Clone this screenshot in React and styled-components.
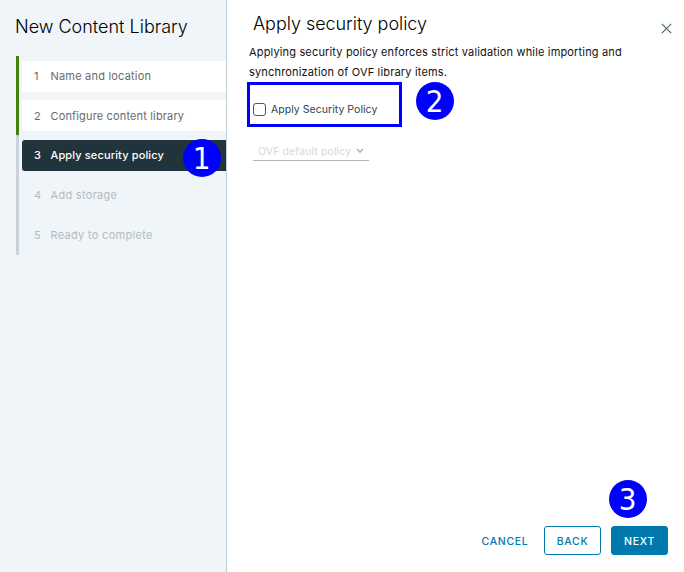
import React from "react";
import styled, { createGlobalStyle } from "styled-components";

const GlobalStyle = createGlobalStyle`
  *, *::before, *::after { box-sizing: border-box; }
  body {
    margin: 0;
    background: #fff;
    overflow: hidden;
    font-family: Inter, "Open Sans", sans-serif;
  }
  h1, h2, p { margin: 0; }
  button { font-family: inherit; }
`;

const Wizard = styled.div`
  position: relative;
  display: grid;
  grid-template-columns: 227px 1fr;
  width: 684px;
  height: 572px;
`;

const Sidebar = styled.aside`
  background: #eff5f8;
  border-right: 1px solid #c1cdd4;
`;

const SidebarTitle = styled.h1`
  height: 56px;
  padding: 14px 0 0 15px;
  font-size: 18px;
  line-height: 26px;
  font-weight: 300;
  letter-spacing: 0;
  color: #000;
  white-space: nowrap;
`;

const Steps = styled.nav`
  display: grid;
  grid-template-rows: 39px repeat(4, 40px);
  margin-left: 16px;
`;

const StepRow = styled.div`
  padding: 5px 0 0 3px;
  border-left: 3px solid ${(p) => (p.$state === "done" ? "#42810e" : "#c8d4da")};
`;

const stepLook = {
  done: { bg: "#fff", fg: "#6a6a6a", weight: 400 },
  current: { bg: "#21333b", fg: "#fff", weight: 500 },
  pending: { bg: "transparent", fg: "#b5bbbe", weight: 400 },
};

const Step = styled.div`
  display: flex;
  align-items: center;
  height: 31px;
  padding: 0 0 ${(p) => p.$lift}px 12px;
  border-radius: 3px 0 0 3px;
  background: ${(p) => stepLook[p.$state].bg};
  color: ${(p) => stepLook[p.$state].fg};
  font-size: 11px;
  font-weight: ${(p) => stepLook[p.$state].weight};
  letter-spacing: ${(p) => p.$spacing}px;
  white-space: nowrap;
`;

const StepNumber = styled.span`
  width: 16.5px;
`;

const Main = styled.main`
  display: flex;
  flex-direction: column;
  padding: 0 16px 17px 21px;
`;

const Header = styled.header`
  display: flex;
  justify-content: space-between;
  height: 42px;
  padding-left: 5px;
  margin-right: -4px;
`;

const PageTitle = styled.h2`
  padding-top: 11px;
  font-size: 18px;
  line-height: 26px;
  font-weight: 300;
  letter-spacing: -0.04px;
  color: #000;
  white-space: nowrap;
`;

const CloseButton = styled.button`
  display: flex;
  width: 11px;
  height: 11px;
  margin: 23px 0 0;
  padding: 0;
  border: 0;
  background: none;
`;

const Description = styled.p`
  height: 40px;
  padding-left: 1px;
  font-size: 11px;
  line-height: 20px;
  color: #111;
  white-space: nowrap;
`;

const Line = styled.span`
  display: block;
  letter-spacing: ${(p) => p.$spacing}px;
`;

const CheckboxFrame = styled.label`
  display: flex;
  align-items: center;
  width: 155px;
  height: 45px;
  margin-left: -1px;
  padding: 9px 0 0 3px;
  border: 3px solid #0000fe;
  font-size: 10.5px;
  letter-spacing: 0.04px;
  color: #2c444f;
  white-space: nowrap;
`;

const Checkbox = styled.span`
  width: 13px;
  height: 13px;
  margin-right: 5px;
  border: 1px solid #555;
  border-radius: 3px;
`;

const Select = styled.div`
  display: flex;
  align-items: center;
  width: 116px;
  height: 19px;
  margin: 15px 0 0 5px;
  padding: 0 5px;
  border-bottom: 1px solid #b3b3b3;
  font-size: 10.5px;
  letter-spacing: 0.12px;
  color: #d8d8d8;
  white-space: nowrap;
`;

const Chevron = styled.svg`
  margin-left: auto;
`;

const Footer = styled.footer`
  display: flex;
  justify-content: flex-end;
  gap: 10px;
  margin-top: auto;
`;

const buttonLook = {
  link: { bg: "transparent", fg: "#0079ad", line: "transparent", width: 58 },
  outline: { bg: "#fff", fg: "#0079ad", line: "#0079ad", width: 57 },
  solid: { bg: "#0079ad", fg: "#fff", line: "#0079ad", width: 57 },
};

const Button = styled.button`
  width: ${(p) => buttonLook[p.$kind].width}px;
  height: 29px;
  padding: 1px 0 0;
  border: 1px solid ${(p) => buttonLook[p.$kind].line};
  border-radius: 3px;
  background: ${(p) => buttonLook[p.$kind].bg};
  color: ${(p) => buttonLook[p.$kind].fg};
  font-size: 10.5px;
  font-weight: 500;
  letter-spacing: ${(p) => p.$spacing}px;
`;

const Badge = styled.span`
  position: absolute;
  left: ${(p) => p.$x}px;
  top: ${(p) => p.$y}px;
  width: 38px;
  height: 38px;
  border-radius: 50%;
  background: #0000fe;
  color: #fff;
  font: 31px/38px "DejaVu Sans Condensed", "DejaVu Sans", sans-serif;
  font-stretch: condensed;
  text-align: center;
  text-indent: -1px;
`;

const steps = [
  { label: "Name and location", state: "done", spacing: 0.2, lift: 1 },
  { label: "Configure content library", state: "done", spacing: 0.15, lift: 0 },
  { label: "Apply security policy", state: "current", spacing: 0.13, lift: 2 },
  { label: "Add storage", state: "pending", spacing: 0.3, lift: 2 },
  { label: "Ready to complete", state: "pending", spacing: 0.3, lift: 2 },
];

export default function App() {
  return (
    <>
      <GlobalStyle />
      <Wizard>
        <Sidebar>
          <SidebarTitle>New Content Library</SidebarTitle>
          <Steps>
            {steps.map((s, i) => (
              <StepRow key={s.label} $state={s.state}>
                <Step $state={s.state} $spacing={s.spacing} $lift={s.lift}>
                  <StepNumber>{i + 1}</StepNumber>
                  <span>{s.label}</span>
                </Step>
              </StepRow>
            ))}
          </Steps>
        </Sidebar>
        <Main>
          <Header>
            <PageTitle>Apply security policy</PageTitle>
            <CloseButton aria-label="Close">
              <svg width="11" height="11" viewBox="0 0 11 11" fill="none" stroke="#4a606b" strokeWidth="1.1">
                <path d="M0.8 0.8 10.2 10.2M10.2 0.8 0.8 10.2" />
              </svg>
            </CloseButton>
          </Header>
          <Description>
            <Line $spacing={0.16}>Applying security policy enforces strict validation while importing and</Line>
            <Line $spacing={0.17}>synchronization of OVF library items.</Line>
          </Description>
          <CheckboxFrame>
            <Checkbox />
            <span>Apply Security Policy</span>
          </CheckboxFrame>
          <Select>
            <span>OVF default policy</span>
            <Chevron width="8" height="6" viewBox="0 0 8 6" fill="none" stroke="#b0b0b0" strokeWidth="1.5">
              <path d="M1 1 4 4.2 7 1" />
            </Chevron>
          </Select>
          <Footer>
            <Button $kind="link" $spacing={0.7}>CANCEL</Button>
            <Button $kind="outline" $spacing={0.7}>BACK</Button>
            <Button $kind="solid" $spacing={0.7}>NEXT</Button>
          </Footer>
        </Main>
        <Badge $x={183} $y={139}>1</Badge>
        <Badge $x={416} $y={82}>2</Badge>
        <Badge $x={609} $y={480}>3</Badge>
      </Wizard>
    </>
  );
}
